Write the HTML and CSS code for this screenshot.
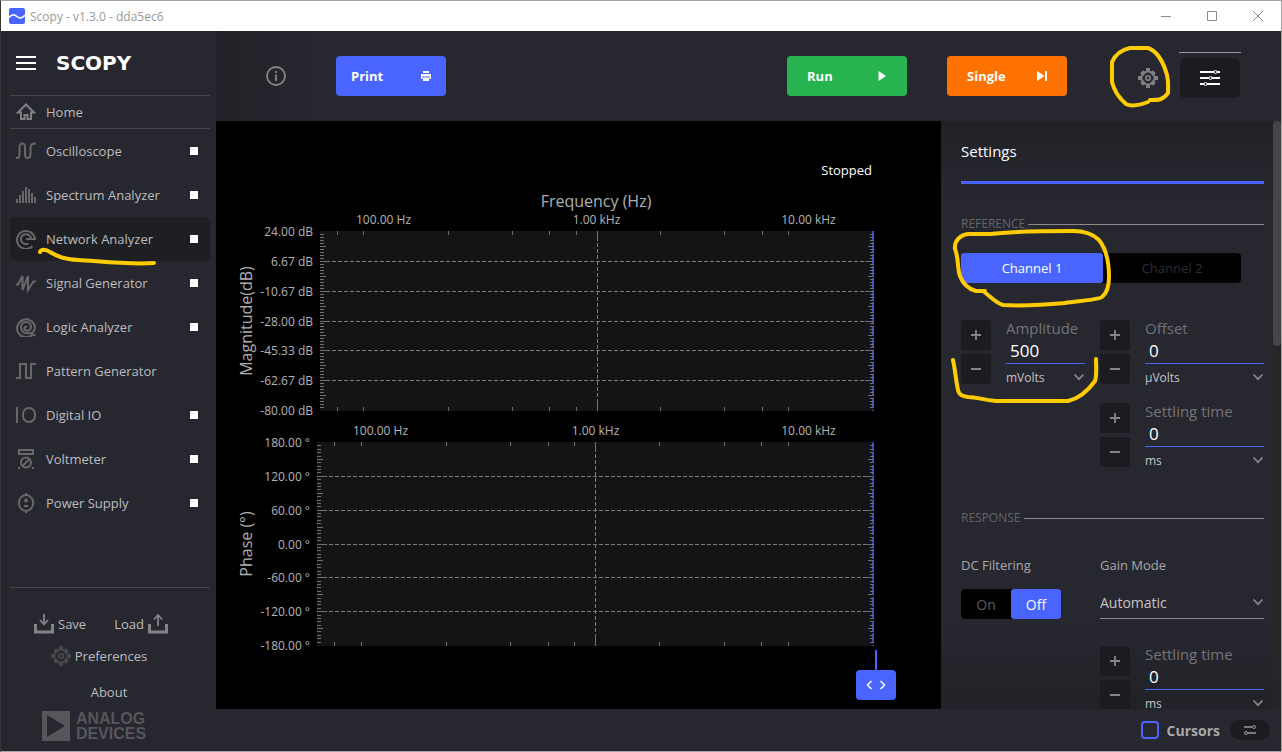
FILE: index.html
```html
<!DOCTYPE html>
<html lang="en">
<head>
<meta charset="utf-8">
<title>Scopy - v1.3.0 - dda5ec6</title>
<link rel="stylesheet" href="styles.css">
</head>
<body>
<svg class="symbols" aria-hidden="true">
  <symbol id="gear" viewBox="0 0 20 20">
    <g fill="currentColor">
      <rect x="8" y="0" width="4" height="4"/><rect x="8" y="16" width="4" height="4"/>
      <rect x="0" y="8" width="4" height="4"/><rect x="16" y="8" width="4" height="4"/>
      <rect x="8" y="1" width="4" height="4" transform="rotate(45 10 10)"/><rect x="8" y="1" width="4" height="4" transform="rotate(135 10 10)"/>
      <rect x="8" y="1" width="4" height="4" transform="rotate(225 10 10)"/><rect x="8" y="1" width="4" height="4" transform="rotate(315 10 10)"/>
    </g>
    <circle cx="10" cy="10" r="6.6" fill="none" stroke="currentColor" stroke-width="2"/>
    <circle cx="10" cy="10" r="2.2" fill="none" stroke="currentColor" stroke-width="1.8"/>
  </symbol>
  <symbol id="chevron" viewBox="0 0 12 8"><path d="M1.5 1.5 6 6.2l4.500-4.700" fill="none" stroke="currentColor" stroke-width="1.7"/></symbol>
  <symbol id="plus" viewBox="0 0 10 10"><path d="M0 5h10M5 0v10" fill="none" stroke="currentColor" stroke-width="1.8"/></symbol>
  <symbol id="minus" viewBox="0 0 10 10"><path d="M0 5h10" fill="none" stroke="currentColor" stroke-width="2"/></symbol>
</svg>

<div class="window">
  <header class="titlebar">
    <svg class="app-icon" viewBox="0 0 16 16"><rect width="16" height="16" rx="2" fill="#4a64ff"/><path d="M0 9.500C2 6.500 5 6 8 8.500s5.500 1.500 8-1.500" fill="none" stroke="#fff" stroke-width="1.600"/></svg>
    <h1 class="app-title">Scopy - v1.3.0 - dda5ec6</h1>
    <div class="window-controls">
      <button type="button" aria-label="Minimize"><svg viewBox="0 0 12 12"><path d="M1 6.500h10"/></svg></button>
      <button type="button" aria-label="Maximize"><svg viewBox="0 0 12 12"><path d="M1.500 1.500h9v9h-9z"/></svg></button>
      <button type="button" aria-label="Close"><svg viewBox="0 0 12 12"><path d="M1 1l10 10M11 1 1 11"/></svg></button>
    </div>
  </header>

  <div class="workspace">
    <aside class="sidebar">
      <div class="brand">
        <button type="button" class="menu-button" aria-label="Menu"><svg viewBox="0 0 20 14"><path d="M0 1h20M0 7h20M0 13h20" stroke="#fff" stroke-width="2"/></svg></button>
        <span class="wordmark">SCOPY</span>
      </div>
      <button type="button" class="home">
        <svg class="nav-icon light" viewBox="0 0 20 20"><path d="M10 2.500 2 10.500h3v6.500h3.500v-4h3v4H15v-6.500h3z" fill="none" stroke="currentColor"/></svg>
        Home
      </button>
      <nav class="tools">
        <div class="tool"><button type="button"><svg class="nav-icon" viewBox="0 0 20 20"><path d="M0 17c3.500 0 3.500-1 3.500-5V6.500C3.500 3.500 4 2.500 6.200 2.500S9 3.500 9 6.500v7c0 2.500.8 3.500 2.700 3.500s2.800-1 2.800-3.500V7c0-3.500 1-4.500 5.500-4.500" fill="none" stroke="currentColor"/></svg>Oscilloscope</button><input type="checkbox" aria-label="Oscilloscope running"></div>
        <div class="tool"><button type="button"><svg class="nav-icon" viewBox="0 0 20 20"><path d="M1 18v-4M4 18v-8M7 18V6M10 18V2M13 18V4M16 18V8M19 18v-6" stroke="currentColor"/></svg>Spectrum Analyzer</button><input type="checkbox" aria-label="Spectrum Analyzer running"></div>
        <div class="tool active"><button type="button" aria-current="page"><svg class="nav-icon" viewBox="0 0 20 20"><path d="M16.500 17.200A9 9 0 1 1 19 10H10M15 10a5 5 0 1 0-2.500 4.500" fill="none" stroke="currentColor"/></svg>Network Analyzer</button><input type="checkbox" aria-label="Network Analyzer running"></div>
        <div class="tool"><button type="button"><svg class="nav-icon" viewBox="0 0 20 20"><path d="M0 11.500h2L6.500 3v14L12 3v14l5.500-8.500H20" fill="none" stroke="currentColor"/></svg>Signal Generator</button><input type="checkbox" aria-label="Signal Generator running"></div>
        <div class="tool"><button type="button"><svg class="nav-icon" viewBox="0 0 20 20"><path d="M19.500 18.500c-2-.2-1.500-1.200-3-.8A9 9 0 1 1 19 10c0 4-2.500 6.500-5.500 6.200C8 17 5 14 5 10a5 5 0 0 1 10 0c0 3-2.500 4-4.500 3.500C7.500 13 8 8.800 11 9.800" fill="none" stroke="currentColor"/></svg>Logic Analyzer</button><input type="checkbox" aria-label="Logic Analyzer running"></div>
        <div class="tool"><button type="button"><svg class="nav-icon" viewBox="0 0 20 20"><path d="M0 17h4V3h6v14h5V3h5" fill="none" stroke="currentColor"/></svg>Pattern Generator</button></div>
        <div class="tool"><button type="button"><svg class="nav-icon" viewBox="0 0 20 20"><path d="M1 2v16" stroke="currentColor"/><rect x="7" y="3" width="12" height="14" rx="6" fill="none" stroke="currentColor"/></svg>Digital IO</button><input type="checkbox" aria-label="Digital IO running"></div>
        <div class="tool"><button type="button"><svg class="nav-icon" viewBox="0 0 20 20"><g fill="none" stroke="currentColor"><path d="M3 1h14v4H3z"/><circle cx="10" cy="13.500" r="5"/><path d="m7 16.500 6-6"/></g><path d="M2 18h2v2H2zM16 18h2v2h-2z" fill="currentColor"/></svg>Voltmeter</button><input type="checkbox" aria-label="Voltmeter running"></div>
        <div class="tool"><button type="button"><svg class="nav-icon" viewBox="0 0 20 20"><g fill="none" stroke="currentColor"><ellipse cx="10" cy="10" rx="7.200" ry="8"/><path d="M10 0v2M10 18v2M8 7.500h4M10 5.500v4M8 13h4"/></g></svg>Power Supply</button><input type="checkbox" aria-label="Power Supply running"></div>
      </nav>
      <footer class="side-footer">
        <div class="files">
          <button type="button"><svg class="file-icon" viewBox="0 0 20 20"><path d="M1.500 10v8h17v-8" fill="none" stroke="currentColor" stroke-width="3"/><path d="M10 0v10M6 6l4 4.500L14 6" fill="none" stroke="currentColor" stroke-width="1.800"/></svg>Save</button>
          <button type="button">Load<svg class="file-icon" viewBox="0 0 20 20"><path d="M1.500 10v8h17v-8" fill="none" stroke="currentColor" stroke-width="3"/><path d="M10 12V1M6 5.500 10 1l4 4.500" fill="none" stroke="currentColor" stroke-width="1.800"/></svg></button>
        </div>
        <button type="button" class="preferences"><svg class="pref-icon"><use href="#gear"/></svg>Preferences</button>
        <button type="button" class="about">About</button>
        <div class="vendor">
          <svg viewBox="0 0 28 30"><path d="M0 0h28v30H0zM5 4v22l18-11z" fill="currentColor" fill-rule="evenodd"/></svg>
          <span>ANALOG<br>DEVICES</span>
        </div>
      </footer>
    </aside>

    <main class="instrument">
      <div class="toolbar">
        <button type="button" class="info" aria-label="Info"><svg viewBox="0 0 20 20"><circle cx="10" cy="10" r="9" fill="none" stroke="currentColor" stroke-width="1.800"/><path d="M10 5v2M10 8.500V15" stroke="currentColor" stroke-width="1.800"/></svg></button>
        <button type="button" class="action print">Print<svg viewBox="0 0 10 10"><path d="M2 0h6v2H2zM0 3h10v5H8.500V5.500h-7V8H0zM2 6.500h6V10H2z" fill="#fff"/></svg></button>
        <button type="button" class="action run">Run<svg viewBox="0 0 10 10"><path d="M1.500 0 9 5l-7.500 5z" fill="#fff"/></svg></button>
        <button type="button" class="action single">Single<svg viewBox="0 0 10 10"><path d="M0 0l7.500 5L0 10zM8 0h2v10H8z" fill="#fff"/></svg></button>
        <button type="button" class="gear-button" aria-label="General settings"><svg><use href="#gear"/></svg></button>
        <div class="panel-tab"><button type="button" aria-label="Instrument settings"><svg viewBox="0 0 20 16"><g fill="none" stroke="#fff"><path d="M0 2h14M17 2h3M0 8h9M12 8h8M0 14h4M7 14h13" stroke-width="1.800"/><circle cx="15.500" cy="2" r="1.500"/><circle cx="10.500" cy="8" r="1.500"/><circle cx="5.500" cy="14" r="1.500"/></g></svg></button></div>
      </div>

      <div class="content">
        <section class="charts">
          <p class="status">Stopped</p>
          <h2 class="axis-title">Frequency (Hz)</h2>
          <svg class="plot magnitude" id="magnitude" role="img" aria-label="Magnitude plot"></svg>
          <svg class="plot phase" id="phase" role="img" aria-label="Phase plot"></svg>
          <div class="handle-row"><button type="button" class="handle" aria-label="Move frequency cursor"><svg viewBox="0 0 20 10"><path d="M5.500 1 1.500 5l4 4M14.500 1l4 4-4 4" fill="none" stroke="#fff" stroke-width="1.500"/></svg></button></div>
        </section>

        <section class="panel">
          <div class="panel-body">
            <h2 class="panel-title">Settings</h2>
            <h3 class="group-title">REFERENCE</h3>
            <div class="segmented channels"><button type="button" class="on">Channel 1</button><button type="button">Channel 2</button></div>
            <div class="fields">
              <div class="spin">
                <div class="steps"><button type="button" aria-label="Increase amplitude"><svg><use href="#plus"/></svg></button><button type="button" aria-label="Decrease amplitude"><svg><use href="#minus"/></svg></button></div>
                <div class="field narrow"><label for="amp">Amplitude</label><input id="amp" type="text" value="500"><div class="unit"><select aria-label="Amplitude unit"><option>mVolts</option></select><svg><use href="#chevron"/></svg></div></div>
              </div>
              <div class="spin">
                <div class="steps"><button type="button" aria-label="Increase offset"><svg><use href="#plus"/></svg></button><button type="button" aria-label="Decrease offset"><svg><use href="#minus"/></svg></button></div>
                <div class="field"><label for="offset">Offset</label><input id="offset" type="text" value="0"><div class="unit"><select aria-label="Offset unit"><option>µVolts</option></select><svg><use href="#chevron"/></svg></div></div>
              </div>
              <div class="spin second">
                <div class="steps"><button type="button" aria-label="Increase settling time"><svg><use href="#plus"/></svg></button><button type="button" aria-label="Decrease settling time"><svg><use href="#minus"/></svg></button></div>
                <div class="field"><label for="settle1">Settling time</label><input id="settle1" type="text" value="0"><div class="unit"><select aria-label="Settling time unit"><option>ms</option></select><svg><use href="#chevron"/></svg></div></div>
              </div>
            </div>
            <h3 class="group-title response">RESPONSE</h3>
            <div class="fields response-fields">
              <div class="dc"><span class="caption">DC Filtering</span><div class="segmented"><button type="button">On</button><button type="button" class="on">Off</button></div></div>
              <div class="gain"><label class="caption" for="gain">Gain Mode</label><div class="unit"><select id="gain"><option>Automatic</option></select><svg><use href="#chevron"/></svg></div></div>
              <div class="spin second">
                <div class="steps"><button type="button" aria-label="Increase response settling time"><svg><use href="#plus"/></svg></button><button type="button" aria-label="Decrease response settling time"><svg><use href="#minus"/></svg></button></div>
                <div class="field"><label for="settle2">Settling time</label><input id="settle2" type="text" value="0"><div class="unit"><select aria-label="Response settling time unit"><option>ms</option></select><svg><use href="#chevron"/></svg></div></div>
              </div>
            </div>
          </div>
          <div class="scrollbar"><div class="thumb"></div></div>
        </section>
      </div>

      <div class="bottombar">
        <label class="cursors"><input type="checkbox">Cursors</label>
        <button type="button" class="cursor-settings" aria-label="Cursor settings"><svg viewBox="0 0 12 10"><g fill="none" stroke="currentColor"><path d="M0 2h8M12 8H4" stroke-width="1.500"/><circle cx="10" cy="2" r="1.500"/><circle cx="2" cy="8" r="1.500"/></g></svg></button>
      </div>
    </main>
  </div>
</div>

<svg class="annotations" aria-hidden="true">
  <path d="M40 252c1-3 6-3 10 0 8 5 14 7 28 8 20 1 50 5 76 3"/>
  <path d="M1148 102c-8 3-16 5-22 2-7-6-12-14-14-22 0-6 0-16 0-20 3-7 9-12 18-14h18c9 3 15 13 19 27 2 8 1 14 1 18-5 8-12 7-18 7"/>
  <path d="M985 291h-9c-8-2-13-7-16-15-3-8-1-17-5-27-1-8 5-14 13-15h23c20-3 60-3 82-3 12 0 20 3 26 9 8 10 10 24 10 37 0 10-2 16-7 20-4 3-24 4-37 6-22 2-44 3-62 2-7-2-12-8-20-14"/>
  <path d="M953 360c2 9 3 21 5 30 1 5 4 6 10 7 10 0 14 3 28 4h72c9-2 19-9 27-20 2-6 1-13 1-22"/>
</svg>
<script src="charts.js"></script>
</body>
</html>
```
FILE: styles.css
```css
* { box-sizing: border-box; }
html, body { height: 100%; margin: 0; }
body {
  background: #000;
  color: #bcbcbe;
  font-family: "Open Sans", "Noto Sans", sans-serif;
  font-size: 13px;
}
h1, h2, h3, p { margin: 0; font-weight: 400; }
button, input, select { font: inherit; color: inherit; background: none; border: 0; padding: 0; margin: 0; }
svg { display: block; }
.symbols { position: absolute; width: 0; height: 0; }

.window {
  display: flex;
  flex-direction: column;
  height: 100vh;
  overflow: hidden;
  background: #272730;
  border: 1px solid #a6a6a6;
  border-left-color: #363634;
}

.titlebar {
  display: flex;
  align-items: center;
  flex: none;
  height: 30px;
  padding: 0 12px 0 8px;
  gap: 5px;
  background: #fff;
}
.app-icon { width: 16px; height: 16px; }
.app-title { font-size: 12px; color: #999; }
.window-controls { display: flex; gap: 34px; margin-left: auto; padding-right: 5px; }
.window-controls svg { width: 12px; height: 12px; fill: none; stroke: #8c8c8c; }

.workspace { display: flex; flex: 1; min-height: 0; }

.sidebar { display: flex; flex-direction: column; flex: none; width: 215px; padding: 0 6px 0 9px; }
.brand { display: flex; align-items: center; gap: 20px; height: 64px; padding-left: 6px; }
.menu-button svg { width: 20px; height: 14px; }
.wordmark { font: 700 20px "DejaVu Sans", sans-serif; color: #fff; }
.home {
  display: flex;
  align-items: center;
  gap: 10px;
  height: 34px;
  padding-left: 6px;
  border-top: 1px solid #46464b;
  border-bottom: 1px solid #46464b;
}
.nav-icon { width: 20px; height: 20px; color: #68686b; stroke-width: 2; }
.nav-icon.light { color: #808084; }
.tool { display: flex; align-items: center; height: 44px; padding: 0 12px 0 6px; border-radius: 5px; }
.tool.active { background: #1e1f23; }
.tool button { display: flex; align-items: center; gap: 10px; flex: 1; }
.tool input { appearance: none; width: 8px; height: 8px; background: #fff; }

.side-footer {
  display: flex;
  flex-direction: column;
  align-items: center;
  margin-top: auto;
  height: 164px;
  padding: 21px 22px 0 0;
  border-top: 1px solid #46464b;
}
.side-footer button { display: flex; align-items: center; gap: 4px; }
.files { display: flex; gap: 28px; height: 30px; padding-left: 4px; }
.file-icon { width: 20px; height: 20px; color: #838387; }
.preferences { height: 34px; }
.side-footer .pref-icon { width: 20px; height: 20px; color: #48484c; }
.about { height: 38px; padding-left: 20px; }
.vendor { display: flex; gap: 6px; padding-right: 10px; color: #56565b; font: 700 16px/15px "Liberation Sans", sans-serif; }
.vendor svg { width: 28px; height: 30px; }

.instrument { display: flex; flex-direction: column; flex: 1; min-width: 0; }
.toolbar {
  display: flex;
  align-items: center;
  flex: none;
  height: 90px;
  padding: 0 40px 0 50px;
  background: linear-gradient(to right, #212227, #272730 100px);
}
.info { color: #858588; }
.info svg, .gear-button svg { width: 20px; height: 20px; }
.action {
  display: flex;
  align-items: center;
  justify-content: space-between;
  width: 120px;
  height: 40px;
  padding: 0 20px;
  border-radius: 4px;
  color: #fff;
  font-weight: 700;
}
.action svg { width: 10px; height: 10px; }
.print { width: 110px; padding: 0 15px; margin-left: 50px; background: #4a64ff; }
.run { margin-left: auto; background: #27b34f; }
.single { margin-left: 40px; background: #ff7200; }
.gear-button { margin: 4px 21px 0 71px; color: #808084; }
.panel-tab { padding: 5px 1px 2px; border-top: 1px solid #9c9c9f; }
.panel-tab button { display: grid; place-items: center; width: 60px; height: 40px; border-radius: 5px; background: #1c1c20; }
.panel-tab svg { width: 20px; height: 16px; }

.content { display: flex; flex: 1; min-height: 0; }
.charts { display: flex; flex-direction: column; flex: 1; min-width: 0; background: #000; }
.status { height: 70px; padding: 40px 69px 0 0; line-height: 18px; text-align: right; color: #fff; }
.axis-title { height: 20px; padding: 0 67px 0 102px; font-size: 16px; line-height: 20px; text-align: center; color: #b0b0b0; }
.plot { width: 100%; min-height: 0; overflow: visible; }
.plot.magnitude { flex: 209 1 0; }
.plot.phase { flex: 236 1 0; }
.plot text { fill: #b4b4b4; font-size: 12px; }
.plot .name { font-size: 16px; fill: #b0b0b0; }
.plot .area { fill: #141416; }
.plot line { stroke: #707072; shape-rendering: crispEdges; }
.plot .grid { stroke: #7c7c7e; stroke-dasharray: 4 2; }
.plot .cursor { stroke: #3346c8; stroke-width: 2; stroke-dasharray: 10 2; stroke-dashoffset: 1; }
.handle-row { display: flex; flex-direction: column; align-items: flex-end; flex: none; height: 53px; padding-right: 45px; }
.handle-row { justify-content: flex-end; padding-bottom: 9px; }
.handle-row::before { content: ""; flex: none; width: 2px; height: 20px; margin-right: 19px; background: #4a64ff; }
.handle { display: grid; place-items: center; flex: none; width: 40px; height: 30px; border-radius: 4px; background: #4a64ff; }
.handle svg { width: 20px; height: 10px; }

.panel {
  display: flex;
  flex: none;
  width: 340px;
  min-height: 0;
  overflow: hidden;
  background: linear-gradient(#212227, #272730 80px, #272730 500px, #212227);
}
.panel-body { flex: 1; min-width: 0; padding: 0 9px 0 20px; }
.panel-title { height: 63px; padding-top: 20px; border-bottom: 3px solid #4a64ff; font-size: 15px; line-height: 20px; color: #fff; }
.group-title { display: flex; align-items: center; gap: 3px; margin-top: 32px; font-size: 12px; line-height: 16px; color: #636368; }
.group-title::after { content: ""; flex: 1; height: 1px; background: #8b8b8b; }
.segmented { display: flex; height: 30px; border-radius: 4px; background: #000; color: #5c5c5e; }
.segmented button { flex: 1; }
.segmented .on { border-radius: 3px; background: #4a64ff; color: #fff; }
.channels { width: 280px; margin-top: 21px; color: #2e2e30; }
.channels .on { flex: none; width: 142px; }
.fields { display: grid; grid-template-columns: 139px 1fr; row-gap: 19px; margin-top: 37px; }
.spin { display: flex; gap: 15px; height: 64px; }
.spin.second { grid-column: 2; }
.steps { display: grid; gap: 4px; width: 30px; grid-template-rows: 30px 30px; }
.steps button { display: grid; place-items: center; background: #1c1c20; color: #858589; border-radius: 4px 4px 0 0; }
.steps button:last-child { border-radius: 0 0 4px 4px; }
.steps svg { width: 10px; height: 10px; }
.field { display: flex; flex-direction: column; flex: 1; min-width: 0; }
.field.narrow { flex: none; width: 79px; }
.field label { flex: none; height: 16px; line-height: 16px; font-size: 15px; color: #737378; }
.field input { flex: none; width: 100%; height: 28px; padding: 2px 4px 0; border-bottom: 1px solid #4a64ff; font-size: 17px; color: #fff; outline: 0; }
.unit { display: grid; grid-template-columns: 1fr 12px; align-items: center; }
.unit select { grid-area: 1 / 1 / 2 / 3; appearance: none; width: 100%; font-size: 12px; color: #c4c4c6; }
.unit svg { grid-area: 1 / 2; width: 12px; height: 8px; color: #88888c; pointer-events: none; }
.field .unit { flex: none; height: 26px; }
.group-title.response { margin-top: 43px; }
.response-fields { row-gap: 27px; margin-top: 29px; }
.caption { display: block; height: 20px; line-height: 20px; color: #a8a8ab; }
.dc .segmented { width: 100px; margin-top: 14px; font-size: 14px; }
.gain .unit { height: 33px; margin-top: 11px; border-bottom: 1px solid #8b8b8b; }
.gain select { font-size: 14px; }
.scrollbar { flex: none; width: 8px; background: #262629; }
.thumb { height: 225px; border-radius: 4px; background: #46464a; }

.bottombar { display: flex; align-items: center; justify-content: flex-end; flex: none; height: 42px; padding-right: 11px; gap: 10px; }
.cursors { display: flex; align-items: center; gap: 8px; font-size: 14px; font-weight: 700; color: #a9a9ac; }
.cursors input { appearance: none; width: 18px; height: 18px; border: 2px solid #4a64ff; border-radius: 4px; }
.cursor-settings { display: grid; place-items: center; width: 40px; height: 20px; border-radius: 10px; background: #1c1c20; color: #9a9a9d; }
.cursor-settings svg { width: 12px; height: 10px; }

.annotations {
  position: absolute;
  top: 0;
  left: 0;
  width: 100%;
  height: 100%;
  fill: none;
  stroke: #ffcc00;
  stroke-width: 4;
  stroke-linecap: round;
  stroke-linejoin: round;
  pointer-events: none;
}
```
FILE: charts.js
```js
const NS = "http://www.w3.org/2000/svg";

const plots = [
  {
    id: "magnitude", name: "Magnitude(dB)", left: 104, top: 20, bottom: 9, labelGap: 7,
    y: ["24.00 dB", "6.67 dB", "-10.67 dB", "-28.00 dB", "-45.33 dB", "-62.67 dB", "-80.00 dB"],
    ticks: [17, 43, 128, 192, 229, 256, 340, 404, 442, 468], major: 277, span: 554,
    x: [["100.00 Hz", 63], ["1.00 kHz", 276], ["10.00 kHz", 488]]
  },
  {
    id: "phase", name: "Phase (°)", left: 101, top: 22, bottom: 10, labelGap: 7,
    y: ["180.00 °", "120.00 °", "60.00 °", "0.00 °", "-60.00 °", "-120.00 °", "-180.00 °"],
    ticks: [17, 44, 129, 193, 231, 257, 342, 407, 444, 471], major: 278, span: 557,
    x: [["100.00 Hz", 63], ["1.00 kHz", 278], ["10.00 kHz", 491]]
  }
];

function add(parent, tag, attrs, text) {
  const el = document.createElementNS(NS, tag);
  for (const key in attrs) el.setAttribute(key, attrs[key]);
  if (text) el.textContent = text;
  parent.appendChild(el);
}

function line(svg, x1, y1, x2, y2, cls) {
  add(svg, "line", { x1, y1, x2, y2, class: cls || "tick" });
}

function draw(plot) {
  const svg = document.getElementById(plot.id);
  const box = svg.getBoundingClientRect();
  const left = plot.left, top = plot.top;
  const right = Math.round(box.width) - 67;
  const bottom = Math.round(box.height) - plot.bottom;
  const scaleX = v => left + Math.round(v * (right - left) / plot.span) + 0.5;
  svg.replaceChildren();
  add(svg, "rect", { x: left, y: top, width: right - left, height: bottom - top, class: "area" });
  line(svg, right - 1, top, right - 1, bottom, "cursor");

  for (let i = 1; i < 60; i++) {
    const y = top + Math.round(i * (bottom - top - 1) / 60) + 0.5;
    const size = i % 10 === 0 ? 9 : i % 5 === 0 ? 6 : 4;
    if (i % 10 === 0) line(svg, left, y, right, y, "grid");
    line(svg, left, y, left + size, y);
    line(svg, right - size, y, right, y);
  }
  for (const t of plot.ticks) {
    const x = scaleX(t);
    line(svg, x, top, x, top + 4);
    line(svg, x, bottom - 4, x, bottom);
  }
  const major = scaleX(plot.major);
  line(svg, major, top, major, bottom, "grid");
  line(svg, major, top, major, top + 9);
  line(svg, major, bottom - 12, major, bottom);

  plot.y.forEach((label, i) => {
    const y = top + Math.round(i * (bottom - top - 1) / 6) + 5;
    add(svg, "text", { x: left - plot.labelGap, y, "text-anchor": "end" }, label);
  });
  for (const [label, v] of plot.x) {
    add(svg, "text", { x: scaleX(v), y: top - 7, "text-anchor": "middle" }, label);
  }
  const middle = (top + bottom) / 2;
  add(svg, "text", { class: "name", "text-anchor": "middle", transform: `translate(36 ${middle}) rotate(-90)` }, plot.name);
}

function drawAll() { plots.forEach(draw); }
drawAll();
window.addEventListener("resize", drawAll);
```
